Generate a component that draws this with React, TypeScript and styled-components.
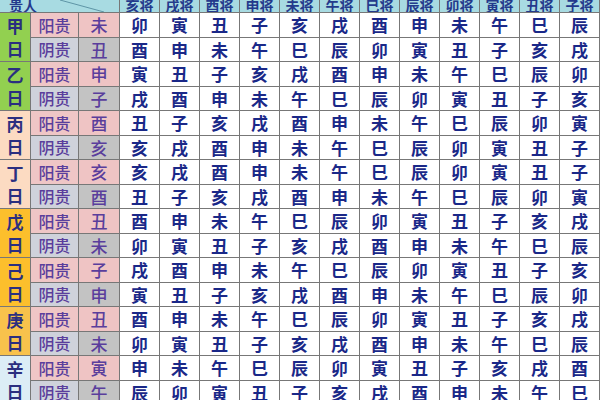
import React from 'react';
import styled, { createGlobalStyle } from 'styled-components';

const BRANCHES = ['子', '丑', '寅', '卯', '辰', '巳', '午', '未', '申', '酉', '戌', '亥'];
const GENERALS = ['亥将', '戌将', '酉将', '申将', '未将', '午将', '巳将', '辰将', '卯将', '寅将', '丑将', '子将'];

// each day: yang noble + start of its row, yin noble + start of its row
const DAYS = [
  { day: '甲', tone: '#92d050', yang: ['未', '卯'], yin: ['丑', '酉'] },
  { day: '乙', tone: '#92d050', yang: ['申', '寅'], yin: ['子', '戌'] },
  { day: '丙', tone: '#fcdbc2', yang: ['酉', '丑'], yin: ['亥', '亥'] },
  { day: '丁', tone: '#fcdbc2', yang: ['亥', '亥'], yin: ['酉', '丑'] },
  { day: '戊', tone: '#fcbf2c', yang: ['丑', '酉'], yin: ['未', '卯'] },
  { day: '己', tone: '#fcbf2c', yang: ['子', '戌'], yin: ['申', '寅'] },
  { day: '庚', tone: '#f8c24c', yang: ['丑', '酉'], yin: ['未', '卯'] },
  { day: '辛', tone: '#dcedf6', yang: ['寅', '申'], yin: ['午', '辰'] },
];

function descending(start: string) {
  const i = BRANCHES.indexOf(start);
  return Array.from({ length: 12 }, (_, k) => BRANCHES[(i - k + 120) % 12]);
}

const GlobalStyle = createGlobalStyle`
  html, body {
    margin: 0;
    padding: 0;
    background: #fff;
    overflow: hidden;
  }
  body {
    font-family: "Noto Sans CJK SC", "Noto Sans", sans-serif;
  }
`;

const Table = styled.div`
  display: grid;
  grid-template-columns: 30px 47px 40px repeat(12, 39px);
  grid-template-rows: 12px repeat(16, 23.5px);
  gap: 1px;
  width: 600px;
  background: #777;
`;

const Corner = styled.div`
  grid-column: 1 / span 3;
  position: relative;
  display: flex;
  align-items: flex-end;
  padding-left: 9px;
  background: #a8dbe2;
  overflow: hidden;

  svg {
    position: absolute;
    left: 0;
    top: 0;
  }
`;

const HeadText = styled.span`
  font-size: 14px;
  line-height: 14px;
  font-weight: 700;
  color: #243a8c;
  margin-bottom: 0;
  white-space: nowrap;
`;

const HeadCell = styled.div`
  display: flex;
  align-items: flex-end;
  justify-content: center;
  background: #a8dbe2;
  overflow: hidden;
`;

const DayCell = styled.div<{ $tone: string }>`
  grid-row: span 2;
  display: flex;
  flex-direction: column;
  align-items: center;
  justify-content: center;
  gap: 3px;
  background: ${(p) => p.$tone};
  color: #2b2f80;
  font-size: 17px;
  line-height: 20px;
  font-weight: 700;
`;

const NobleCell = styled.div<{ $yin?: boolean }>`
  display: flex;
  align-items: center;
  justify-content: center;
  background: ${(p) => (p.$yin ? '#cfd2db' : '#efc6c6')};
  color: #5a3e9c;
  font-size: 16px;
  font-weight: 500;
`;

const BranchCell = styled.div<{ $yin?: boolean }>`
  display: flex;
  align-items: center;
  justify-content: center;
  background: ${(p) => (p.$yin ? '#c3c3c3' : '#efc4c4')};
  color: #5a3e9c;
  font-size: 17px;
  font-weight: 500;
`;

const ValueCell = styled.div`
  display: flex;
  align-items: center;
  justify-content: center;
  background: #fff;
  color: #1a2888;
  font-size: 17px;
  font-weight: 700;
`;

function Row({ label, branch, start, yin }: { label: string; branch: string; start: string; yin?: boolean }) {
  return (
    <>
      <NobleCell $yin={yin}>{label}</NobleCell>
      <BranchCell $yin={yin}>{branch}</BranchCell>
      {descending(start).map((b, i) => (
        <ValueCell key={i}>{b}</ValueCell>
      ))}
    </>
  );
}

export default function App() {
  return (
    <>
      <GlobalStyle />
      <Table>
        <Corner>
          <svg width="117" height="12">
            <line x1="60" y1="0" x2="104" y2="12" stroke="#5f95a6" strokeWidth="1" />
          </svg>
          <HeadText>贵人</HeadText>
        </Corner>
        {GENERALS.map((g) => (
          <HeadCell key={g}>
            <HeadText>{g}</HeadText>
          </HeadCell>
        ))}
        {DAYS.map((d) => (
          <React.Fragment key={d.day}>
            <DayCell $tone={d.tone}>
              <span>{d.day}</span>
              <span>日</span>
            </DayCell>
            <Row label="阳贵" branch={d.yang[0]} start={d.yang[1]} />
            <Row label="阴贵" branch={d.yin[0]} start={d.yin[1]} yin />
          </React.Fragment>
        ))}
      </Table>
    </>
  );
}
